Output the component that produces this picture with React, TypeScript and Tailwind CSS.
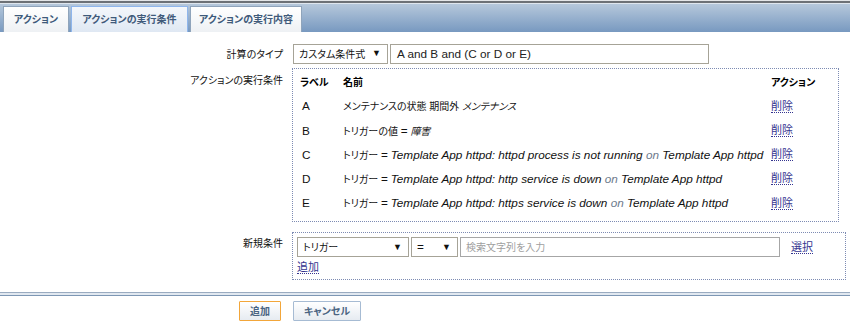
import React from 'react';

const font = "font-['Liberation_Sans','Noto_Sans_CJK_JP',sans-serif] [font-feature-settings:'palt']";

// Latin text is set a bit larger than the CJK text, as in the original
const L: React.FC<{ children: React.ReactNode; className?: string }> = ({ children, className = '' }) => (
    <span className={`text-[11.75px] ${className}`}>{children}</span>
);

const Link: React.FC<{ children: React.ReactNode }> = ({ children }) => (
    <span className="text-[11px] text-[#34348f] border-b border-dotted border-[#34348f] leading-[12px] cursor-pointer">{children}</span>
);

const Select: React.FC<{ label: React.ReactNode; width: string }> = ({ label, width }) => (
    <div className={`${width} h-5 border border-[#a6a397] bg-white flex items-center justify-between pl-[5px] pr-[6px] text-[#111]`}>
        <span>{label}</span>
        <span className="text-[9px]">▼</span>
    </div>
);

const On = () => <span className="text-[#6d7a8c]">on</span>;

const rows = [
    { label: 'A', name: <>メンテナンスの状態 期間外 <i>メンテナンス</i></> },
    { label: 'B', name: <>トリガーの値 <L>=</L> <i>障害</i></> },
    { label: 'C', name: <>トリガー <L>=</L> <L className="italic">Template App httpd: httpd process is not running <On /> Template App httpd</L></> },
    { label: 'D', name: <>トリガー <L>=</L> <L className="italic">Template App httpd: http service is down <On /> Template App httpd</L></> },
    { label: 'E', name: <>トリガー <L>=</L> <L className="italic">Template App httpd: https service is down <On /> Template App httpd</L></> },
];

export default function App() {
    return (
        <div className={`w-[850px] h-[322px] bg-white text-[10px] text-[#111] overflow-hidden ${font}`}>
            {/* Tab bar */}
            <div className="h-px bg-[#e4e6e8]"></div>
            <div className="h-[2px] bg-[#6d7176]"></div>
            <div className="h-[29px] bg-gradient-to-b from-[#b6c8db] to-[#7899c0] flex items-end pl-[3px] gap-[2px] border-t border-[#dfe6ee]">
                <div className="w-[66px] h-[26px] bg-gradient-to-b from-white to-[#eef1f4] border border-[#8fa4bb] border-b-0 flex items-center justify-center font-bold text-[#3f5a7a]">アクション</div>
                <div className="w-[117px] h-[26px] bg-gradient-to-b from-[#f4f7fb] to-[#dfe8f3] border border-[#8fb6ec] border-b-0 flex items-center justify-center font-bold text-[#3f5a7a]">アクションの実行条件</div>
                <div className="w-[112px] h-[26px] bg-gradient-to-b from-white to-[#eef1f4] border border-[#8fa4bb] border-b-0 flex items-center justify-center font-bold text-[#3f5a7a]">アクションの実行内容</div>
            </div>

            {/* Form */}
            <div className="mt-[12px] flex flex-col">
                <div className="flex h-5">
                    <div className="w-[283px] text-right flex items-center justify-end">計算のタイプ</div>
                    <div className="ml-[10px] flex gap-[2px]">
                        <Select label="カスタム条件式" width="w-[95px]" />
                        <div className="w-[319px] h-5 border border-[#a6a397] flex items-center pl-[6px] text-[#222]"><L>A and B and (C or D or E)</L></div>
                    </div>
                </div>

                <div className="flex mt-[4px]">
                    <div className="w-[283px] text-right pt-[5px]">アクションの実行条件</div>
                    <div className="ml-[9px] w-[547px] border border-dotted border-[#7d8bb3] pt-px pb-[6px] pl-[7px] pr-[10px]">
                        <div className="flex h-6 items-center font-bold text-black">
                            <div className="w-[43px]">ラベル</div>
                            <div className="flex-1">名前</div>
                            <div className="w-[57px]">アクション</div>
                        </div>
                        {rows.map(r => (
                            <div key={r.label} className="flex h-[24.25px] items-center">
                                <div className="w-[43px] pl-[2px]"><L>{r.label}</L></div>
                                <div className="flex-1 whitespace-nowrap">{r.name}</div>
                                <div className="w-[57px]"><Link>削除</Link></div>
                            </div>
                        ))}
                    </div>
                </div>

                <div className="flex mt-[10px]">
                    <div className="w-[283px] text-right pt-[4px]">新規条件</div>
                    <div className="ml-[9px] w-[554px] h-[48px] border border-dotted border-[#7d8bb3] pt-[4px] pl-[4px]">
                        <div className="flex items-center gap-[2px]">
                            <Select label="トリガー" width="w-[112px]" />
                            <Select label={<L>=</L>} width="w-[47px]" />
                            <div className="w-[320px] h-5 border border-[#a6a6a6] flex items-center pl-[5px] text-[#a0a0a0]">検索文字列を入力</div>
                            <div className="ml-[9px]"><Link>選択</Link></div>
                        </div>
                        <div className="mt-[3px]"><Link>追加</Link></div>
                    </div>
                </div>

                {/* Footer separator */}
                <div className="mt-[12px] h-px bg-[#9aabc0]"></div>
                <div className="h-[2px] bg-[#e1e8f0]"></div>
                <div className="h-px bg-[#7d97b4]"></div>

                <div className="flex mt-[5px]">
                    <div className="w-[281px] flex justify-end">
                        <button className="w-[42px] h-5 border border-[#f2a63a] bg-gradient-to-b from-white to-[#e6ebf1] font-bold text-[#4a6482] rounded-[1px]">追加</button>
                    </div>
                    <div className="ml-[12px]">
                        <button className="w-[68px] h-5 border border-[#a6bbd3] bg-gradient-to-b from-white to-[#e6ebf1] font-bold text-[#4a6482] rounded-[1px]">キャンセル</button>
                    </div>
                </div>
            </div>
        </div>
    );
}
